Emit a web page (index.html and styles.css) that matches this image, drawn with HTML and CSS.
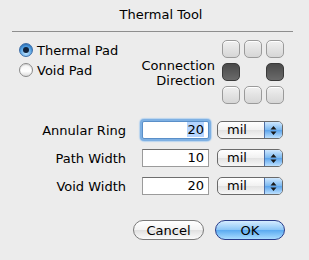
FILE: index.html
```html
<!DOCTYPE html>
<html lang="en">
<head>
  <meta charset="UTF-8" />
  <title>Thermal Tool</title>
  <link rel="stylesheet" href="styles.css">
</head>
<body>
  <div class="dialog">
    <div class="title">Thermal Tool</div>

    <div class="top">
      <div class="radios">
        <label class="radio on"><span class="dot"></span>Thermal Pad</label>
        <label class="radio"><span class="dot"></span>Void Pad</label>
      </div>
      <div class="conn">
        <div class="conn-label">Connection<br>Direction</div>
        <div class="tiles">
          <span class="tile"></span><span class="tile"></span><span class="tile"></span>
          <span class="tile on"></span><span class="gap"></span><span class="tile on"></span>
          <span class="tile"></span><span class="tile"></span><span class="tile"></span>
        </div>
      </div>
    </div>

    <div class="fields">
      <div class="label">Annular Ring</div>
      <div class="input focus"><span class="sel">20</span></div>
      <div class="popup"><span class="val">mil</span><span class="arrows"><svg width="7" height="11" viewBox="0 0 7 11"><path d="M3.5 1 L6.5 4.5 H0.5 Z M3.5 10 L6.5 6.5 H0.5 Z" fill="#1a1a1a"/></svg></span></div>

      <div class="label">Path Width</div>
      <div class="input">10</div>
      <div class="popup"><span class="val">mil</span><span class="arrows"><svg width="7" height="11" viewBox="0 0 7 11"><path d="M3.5 1 L6.5 4.5 H0.5 Z M3.5 10 L6.5 6.5 H0.5 Z" fill="#1a1a1a"/></svg></span></div>

      <div class="label">Void Width</div>
      <div class="input">20</div>
      <div class="popup"><span class="val">mil</span><span class="arrows"><svg width="7" height="11" viewBox="0 0 7 11"><path d="M3.5 1 L6.5 4.5 H0.5 Z M3.5 10 L6.5 6.5 H0.5 Z" fill="#1a1a1a"/></svg></span></div>
    </div>

    <div class="buttons">
      <button class="btn">Cancel</button>
      <button class="btn default">OK</button>
    </div>
  </div>
</body>
</html>
```

FILE: styles.css
```css
body {
  margin: 0;
  background: #ececec;
  font-family: "DejaVu Sans", "Liberation Sans", sans-serif;
  font-size: 13px;
  color: #000;
}
.dialog {
  width: 309px;
  height: 260px;
}
.title {
  margin: 0 16px 0 12px;
  padding-left: 17px;
  height: 31px;
  line-height: 30px;
  text-align: center;
  border-bottom: 1px solid #8e8e8e;
}

/* top area */
.top {
  display: flex;
  justify-content: space-between;
  padding: 8px 25px 0 19px;
}
.radios {
  display: flex;
  flex-direction: column;
  gap: 4px;
  padding-top: 2px;
}
.radio {
  display: flex;
  align-items: center;
  gap: 4px;
  height: 16px;
}
.dot {
  width: 12px;
  height: 12px;
  border-radius: 50%;
  border: 1px solid #8a8a8a;
  background: linear-gradient(#f4f4f4, #fff 60%, #dcdcdc);
  box-shadow: inset 0 1px 1px rgba(0, 0, 0, 0.15);
  position: relative;
}
.radio.on .dot {
  border-color: #3d6ea8;
  background: radial-gradient(circle at 50% 75%, #bfe4ff, #4b9be0 60%, #2a6dc0);
}
.radio.on .dot::after {
  content: "";
  position: absolute;
  left: 3px;
  top: 3px;
  width: 6px;
  height: 6px;
  border-radius: 50%;
  background: #10213a;
}
.conn {
  display: flex;
  align-items: center;
  gap: 7px;
}
.conn-label {
  text-align: right;
  line-height: 15px;
  padding-top: 2px;
}
.tiles {
  display: grid;
  grid-template-columns: repeat(3, 18px);
  grid-template-rows: repeat(3, 18px);
  column-gap: 4px;
  row-gap: 5px;
}
.tile {
  border-radius: 5px;
  border: 1px solid #9a9a9a;
  background: linear-gradient(#f0f0f0, #d6d6d6);
  box-shadow: inset 0 1px 0 #fff;
}
.tile.on {
  border-color: #3a3a3a;
  background: linear-gradient(#4a4a4a, #6a6a6a);
  box-shadow: none;
}

/* fields */
.fields {
  display: grid;
  grid-template-columns: 124px 67px 66px;
  column-gap: 8px;
  row-gap: 10px;
  align-items: center;
  padding: 17px 0 0 10px;
}
.label {
  text-align: right;
  margin-right: 8px;
}
.input {
  height: 16px;
  line-height: 16px;
  background: #fff;
  border: 1px solid #9b9b9b;
  border-top-color: #6e6e6e;
  text-align: right;
  padding-right: 4px;
}
.input.focus {
  border-color: #5a8fc8;
  box-shadow: 0 0 0 2px #7eb0e3, 0 0 1px 3px #b9d4ef;
  border-radius: 2px;
}
.sel {
  background: #b5d5ff;
}
.popup {
  display: flex;
  height: 16px;
  border: 1px solid #6a6a6a;
  border-radius: 5px;
  overflow: hidden;
  background: linear-gradient(#fff, #f1f1f1 50%, #e2e2e2 51%, #f7f7f7);
}
.popup .val {
  flex: 1;
  padding-left: 9px;
  line-height: 16px;
}
.popup .arrows {
  width: 17px;
  display: flex;
  align-items: center;
  justify-content: center;
  border-left: 1px solid #4f6fa5;
  background: linear-gradient(#cfe8ff, #7ab8f0 50%, #5aa3ec 51%, #bde1ff);
}

/* buttons */
.buttons {
  display: flex;
  justify-content: flex-end;
  gap: 11px;
  padding: 25px 24px 0 0;
}
.btn {
  font: inherit;
  width: 71px;
  height: 20px;
  padding: 0;
  border-radius: 10px;
  border: 1px solid #7a7a7a;
  background: linear-gradient(#fff, #f3f3f3 50%, #e0e0e0 51%, #fbfbfb);
  color: #000;
}
.btn.default {
  width: 70px;
  border-color: #2a3d8a;
  background: linear-gradient(#d5ecff, #8ac5f6 50%, #5aaaf0 51%, #a9dcff);
}
```
